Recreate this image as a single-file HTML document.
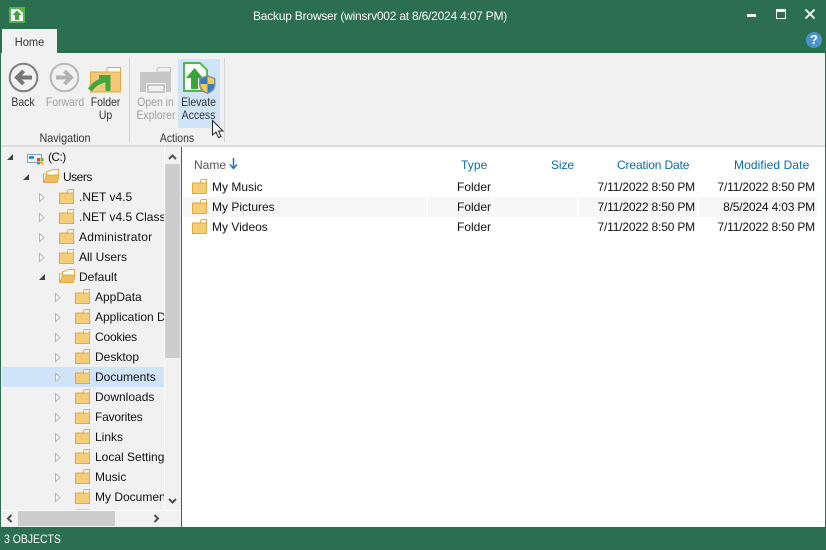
<!DOCTYPE html>
<html><head><meta charset="utf-8">
<style>
html,body{margin:0;padding:0;width:826px;height:550px;overflow:hidden;background:#2b6e50;}
body{position:relative;font-family:"Liberation Sans",sans-serif;font-size:12px;color:#111;}
.a{position:absolute;white-space:nowrap;line-height:16px;}
svg{position:absolute;overflow:visible;}
.c{text-align:center;}
.r{transform:scaleX(.87);color:#333;}
.g{color:#a0a0a0;}
.h{color:#0a6ab0;}
.d{letter-spacing:-.18px;}
</style></head><body>
<svg width="0" height="0" style="position:absolute"><defs>
<g id="f"><path d="M8.500 4.500V2.500Q8.500 .5 10.500 .5H14.500V4.500Z" fill="#fff" stroke="#e3a93c"/><rect x=".5" y="4" width="14" height="10.500" fill="#f3cd78" stroke="#e3a93c"/></g>
<g id="o"><path d="M3.500 5V3L9 .8 15.500 .5V9L14 13.500H.5V5Z" fill="#fff" stroke="#e3a93c"/><path d="M1 13.500L3.500 6H16L14 13.500Z" fill="#eebf62" stroke="#e3a93c"/></g>
<path id="t" d="M.5 .5L5 4.500 .5 8.500Z" fill="#fff" stroke="#b5b5b5"/>
<path id="e" d="M6 0V6H0Z" fill="#444"/>
</defs></svg>

<!-- title bar -->
<svg style="left:9px;top:7px" width="16" height="16"><rect x="0" y="0" width="16" height="16" fill="#4fb848"/><path d="M2 2H10L14 6V14H2Z" fill="#fff"/><path d="M8 3.500L12.500 8H10V13H6V8H3.500Z" fill="#3aa53a"/></svg>
<div class="a c" style="left:0;top:8px;width:760px;color:#fff;letter-spacing:-.22px;">Backup Browser (winsrv002 at 8/6/2024 4:07 PM)</div>
<svg style="left:747px;top:9px" width="70" height="14"><rect x="0" y="5" width="9" height="3" fill="#fff"/><rect x="29.500" y=".5" width="9" height="9" fill="none" stroke="#fff"/><rect x="29" y="0" width="10" height="3" fill="#fff"/><path d="M58.500 .5L67.500 9.500M67.500 .5L58.500 9.500" stroke="#fff" stroke-width="1.800"/></svg>
<div class="a c" style="left:806px;top:32px;width:16px;height:16px;line-height:16px;border-radius:8px;background:#4b94cd;color:#fff;font-weight:bold;font-size:13px;">?</div>

<!-- tab -->
<div class="a" style="left:2px;top:29px;width:55px;height:26px;background:#f1f1f1;"></div>
<div class="a c" style="left:2px;top:34px;width:55px;color:#333;transform:scaleX(.92);">Home</div>

<!-- ribbon -->
<div class="a" style="left:1px;top:53px;width:824px;height:92px;background:#f1f1f1;"></div>
<div class="a" style="left:129px;top:58px;width:1px;height:84px;background:#d5d5d5;"></div>
<div class="a" style="left:224px;top:58px;width:1px;height:84px;background:#d5d5d5;"></div>
<div class="a" style="left:178px;top:59px;width:42px;height:69px;background:#cfe4f8;"></div>

<svg style="left:9px;top:63px" width="30" height="30"><circle cx="14.500" cy="14.500" r="13.800" fill="#f1f1f1" stroke="#808080" stroke-width="2"/><path d="M8 14.500H23M14.500 8L8 14.500 14.500 21" fill="none" stroke="#777" stroke-width="4"/></svg>
<svg style="left:50px;top:63px" width="30" height="30"><circle cx="14.500" cy="14.500" r="13.800" fill="#f1f1f1" stroke="#b8b8b8" stroke-width="2"/><path d="M21 14.500H6M14.500 8L21 14.500 14.500 21" fill="none" stroke="#b2b2b2" stroke-width="4"/></svg>
<svg style="left:90px;top:67px" width="31" height="26"><path d="M17 5V2.500Q17 .5 19 .5H30.500V5Z" fill="#fff" stroke="#e3a93c"/><rect x=".5" y="5" width="30" height="20" fill="#f3c879" stroke="#e3a93c"/><path d="M0 23Q6 14 17 12.500" fill="none" stroke="#3fa83f" stroke-width="5"/><path d="M9 10.500H18V24" fill="none" stroke="#3fa83f" stroke-width="5"/></svg>
<svg style="left:140px;top:67px" width="31" height="26"><path d="M17 5V2.500Q17 .5 19 .5H30.500V5Z" fill="#f1f1f1" stroke="#c8c8c8"/><path d="M0 5H31V25H26V16H6V25H0Z" fill="#c6c6c6"/><rect x="8" y="18" width="16" height="7" fill="none" stroke="#c6c6c6" stroke-width="2"/></svg>
<svg style="left:183px;top:62px" width="34" height="32"><path d="M1 1H17L24 8V29H1Z" fill="#fff" stroke="#4fb848" stroke-width="2"/><path d="M11.500 6L20 16H15V27H8V16H3Z" fill="#37a437"/><path d="M16 16L24.500 13 32.500 16V23Q32.500 29 24.500 32 16 29 16 23Z" fill="#8a8f96"/><path d="M24.500 14.500V22H17.500V17L24.500 14.500Z" fill="#2f7fc4"/><path d="M24.500 14.500L31 17V22H24.500Z" fill="#f6c94a"/><path d="M17.500 22H24.500V30.500Q18 28 17.500 22Z" fill="#f6c94a"/><path d="M24.500 22H31Q31 28 24.500 30.500Z" fill="#2f7fc4"/></svg>

<div class="a c r" style="left:3px;top:94px;width:40px;">Back</div>
<div class="a c r g" style="left:42px;top:94px;width:46px;color:#a0a0a0;">Forward</div>
<div class="a c r" style="left:85px;top:94px;width:41px;">Folder</div>
<div class="a c r" style="left:85px;top:107px;width:41px;">Up</div>
<div class="a c r" style="left:134px;top:94px;width:43px;color:#a0a0a0;">Open in</div>
<div class="a c r" style="left:133px;top:107px;width:46px;color:#a0a0a0;">Explorer</div>
<div class="a c r" style="left:177px;top:94px;width:43px;">Elevate</div>
<div class="a c r" style="left:177px;top:107px;width:43px;">Access</div>
<div class="a c r" style="left:2px;top:130px;width:126px;transform:scaleX(.9);">Navigation</div>
<div class="a c r" style="left:131px;top:130px;width:92px;">Actions</div>

<svg style="left:212px;top:120px" width="12" height="20"><path d="M.5 .5V15L4 12 6.500 17.500 9 16.500 6.500 11H11Z" fill="#fff" stroke="#222"/></svg>

<!-- separator -->
<div class="a" style="left:1px;top:145px;width:824px;height:2px;background:#dcdcdc;"></div>

<!-- tree -->
<div class="a" style="left:1px;top:147px;width:180px;height:380px;background:#f1f1f1;"></div>
<div class="a" style="left:181px;top:147px;width:1px;height:380px;background:#2b6e50;"></div>
<div class="a" style="left:2px;top:367px;width:162px;height:20px;background:#cfe4f8;"></div>

<svg style="left:7px;top:154px" width="6" height="6"><use href="#e"/></svg>
<svg style="left:27px;top:154px" width="17" height="11"><rect x=".5" y=".5" width="14" height="8" fill="#eef4fa" stroke="#8aa0b5"/><rect x="2" y="2" width="5" height="3" fill="#3a8fd0"/><rect x="10" y="4" width="3" height="3" fill="#e8452f"/><rect x="13.500" y="4" width="3" height="3" fill="#7cb82f"/><rect x="10" y="7.500" width="3" height="3" fill="#2f9ae0"/><rect x="13.500" y="7.500" width="3" height="3" fill="#f6b81a"/></svg>
<div class="a" style="left:48px;top:149px;letter-spacing:-.6px;">(C:)</div>
<svg style="left:23px;top:174px" width="6" height="6"><use href="#e"/></svg>
<svg style="left:43px;top:169px" width="17" height="15"><use href="#o"/></svg>
<div class="a" style="left:63px;top:169px;letter-spacing:-.5px;">Users</div>

<svg style="left:39px;top:193px" width="6" height="9"><use href="#t"/></svg><svg style="left:59px;top:189px" width="15" height="15"><use href="#f"/></svg><div class="a" style="left:79px;top:189px;">.NET v4.5</div>
<svg style="left:39px;top:213px" width="6" height="9"><use href="#t"/></svg><svg style="left:59px;top:209px" width="15" height="15"><use href="#f"/></svg><div class="a" style="left:79px;top:209px;width:85px;overflow:hidden;">.NET v4.5 Classic</div>
<svg style="left:39px;top:233px" width="6" height="9"><use href="#t"/></svg><svg style="left:59px;top:229px" width="15" height="15"><use href="#f"/></svg><div class="a" style="left:79px;top:229px;letter-spacing:.2px;">Administrator</div>
<svg style="left:39px;top:253px" width="6" height="9"><use href="#t"/></svg><svg style="left:59px;top:249px" width="15" height="15"><use href="#f"/></svg><div class="a" style="left:79px;top:249px;">All Users</div>
<svg style="left:39px;top:274px" width="6" height="6"><use href="#e"/></svg><svg style="left:59px;top:269px" width="17" height="15"><use href="#o"/></svg><div class="a" style="left:79px;top:269px;">Default</div>

<svg style="left:55px;top:293px" width="6" height="9"><use href="#t"/></svg><svg style="left:75px;top:289px" width="15" height="15"><use href="#f"/></svg><div class="a" style="left:95px;top:289px;">AppData</div>
<svg style="left:55px;top:313px" width="6" height="9"><use href="#t"/></svg><svg style="left:75px;top:309px" width="15" height="15"><use href="#f"/></svg><div class="a" style="left:95px;top:309px;width:69px;overflow:hidden;">Application Data</div>
<svg style="left:55px;top:333px" width="6" height="9"><use href="#t"/></svg><svg style="left:75px;top:329px" width="15" height="15"><use href="#f"/></svg><div class="a" style="left:95px;top:329px;letter-spacing:-.2px;">Cookies</div>
<svg style="left:55px;top:353px" width="6" height="9"><use href="#t"/></svg><svg style="left:75px;top:349px" width="15" height="15"><use href="#f"/></svg><div class="a" style="left:95px;top:349px;">Desktop</div>
<svg style="left:55px;top:373px" width="6" height="9"><use href="#t"/></svg><svg style="left:75px;top:369px" width="15" height="15"><use href="#f"/></svg><div class="a" style="left:95px;top:369px;">Documents</div>
<svg style="left:55px;top:393px" width="6" height="9"><use href="#t"/></svg><svg style="left:75px;top:389px" width="15" height="15"><use href="#f"/></svg><div class="a" style="left:95px;top:389px;">Downloads</div>
<svg style="left:55px;top:413px" width="6" height="9"><use href="#t"/></svg><svg style="left:75px;top:409px" width="15" height="15"><use href="#f"/></svg><div class="a" style="left:95px;top:409px;letter-spacing:-.2px;">Favorites</div>
<svg style="left:55px;top:433px" width="6" height="9"><use href="#t"/></svg><svg style="left:75px;top:429px" width="15" height="15"><use href="#f"/></svg><div class="a" style="left:95px;top:429px;">Links</div>
<svg style="left:55px;top:453px" width="6" height="9"><use href="#t"/></svg><svg style="left:75px;top:449px" width="15" height="15"><use href="#f"/></svg><div class="a" style="left:95px;top:449px;width:69px;overflow:hidden;">Local Settings</div>
<svg style="left:55px;top:473px" width="6" height="9"><use href="#t"/></svg><svg style="left:75px;top:469px" width="15" height="15"><use href="#f"/></svg><div class="a" style="left:95px;top:469px;">Music</div>
<svg style="left:55px;top:493px" width="6" height="9"><use href="#t"/></svg><svg style="left:75px;top:489px" width="15" height="15"><use href="#f"/></svg><div class="a" style="left:95px;top:489px;width:69px;overflow:hidden;">My Documents</div>
<div class="a" style="left:75px;top:509px;width:15px;height:1px;background:#f3cd78;"></div>

<!-- tree scrollbars -->
<div class="a" style="left:1px;top:510px;width:180px;height:17px;background:#f1f1f1;border-top:1px solid #fff;box-sizing:border-box;"></div>
<div class="a" style="left:164px;top:147px;width:1px;height:363px;background:#fff;"></div>
<div class="a" style="left:165px;top:164px;width:15px;height:194px;background:#cdcdcd;"></div>
<div class="a" style="left:18px;top:511px;width:97px;height:15px;background:#cdcdcd;"></div>
<svg style="left:168px;top:154px" width="9" height="6"><path d="M1 5L4.500 1.500 8 5" fill="none" stroke="#505050" stroke-width="2"/></svg>
<svg style="left:168px;top:498px" width="9" height="6"><path d="M1 1L4.500 4.500 8 1" fill="none" stroke="#505050" stroke-width="2"/></svg>
<svg style="left:6px;top:514px" width="7" height="9"><path d="M5.500 1L2 4.500 5.500 8" fill="none" stroke="#505050" stroke-width="2"/></svg>
<svg style="left:153px;top:514px" width="7" height="9"><path d="M1.500 1L5 4.500 1.500 8" fill="none" stroke="#505050" stroke-width="2"/></svg>

<!-- list -->
<div class="a" style="left:182px;top:147px;width:643px;height:380px;background:#fff;"></div>
<div class="a" style="left:183px;top:197px;width:634px;height:20px;background:#f6f6f6;"></div>
<div class="a" style="left:426px;top:197px;width:2px;height:20px;background:#fff;"></div>
<div class="a" style="left:492px;top:197px;width:2px;height:20px;background:#fff;"></div>
<div class="a" style="left:577px;top:197px;width:2px;height:20px;background:#fff;"></div>
<div class="a" style="left:697px;top:197px;width:2px;height:20px;background:#fff;"></div>

<div class="a" style="left:194px;top:157px;color:#555;">Name</div>
<svg style="left:229px;top:158px" width="9" height="12"><path d="M4.500 0V10M1 6.500L4.500 10.500 8 6.500" fill="none" stroke="#1a76bd" stroke-width="1.500"/></svg>
<div class="a h" style="left:461px;top:157px;letter-spacing:.1px;">Type</div>
<div class="a h" style="left:551px;top:157px;letter-spacing:-.1px;">Size</div>
<div class="a h" style="left:617px;top:157px;letter-spacing:-.13px;">Creation Date</div>
<div class="a h" style="left:734px;top:157px;letter-spacing:.1px;">Modified Date</div>

<svg style="left:192px;top:179px" width="15" height="15"><use href="#f"/></svg><div class="a" style="left:212px;top:179px;">My Music</div>
<svg style="left:192px;top:199px" width="15" height="15"><use href="#f"/></svg><div class="a" style="left:212px;top:199px;">My Pictures</div>
<svg style="left:192px;top:219px" width="15" height="15"><use href="#f"/></svg><div class="a" style="left:212px;top:219px;">My Videos</div>

<div class="a" style="left:457px;top:179px;">Folder</div>
<div class="a" style="left:457px;top:199px;">Folder</div>
<div class="a" style="left:457px;top:219px;">Folder</div>

<div class="a d" style="left:575px;top:179px;width:120px;text-align:right;">7/11/2022 8:50 PM</div>
<div class="a d" style="left:575px;top:199px;width:120px;text-align:right;">7/11/2022 8:50 PM</div>
<div class="a d" style="left:575px;top:219px;width:120px;text-align:right;">7/11/2022 8:50 PM</div>
<div class="a d" style="left:695px;top:179px;width:120px;text-align:right;">7/11/2022 8:50 PM</div>
<div class="a d" style="left:695px;top:199px;width:120px;text-align:right;">8/5/2024 4:03 PM</div>
<div class="a d" style="left:695px;top:219px;width:120px;text-align:right;">7/11/2022 8:50 PM</div>

<!-- status -->
<div class="a" style="left:4px;top:531px;color:#fff;transform:scaleX(.87);transform-origin:left center;">3 OBJECTS</div>
</body></html>
